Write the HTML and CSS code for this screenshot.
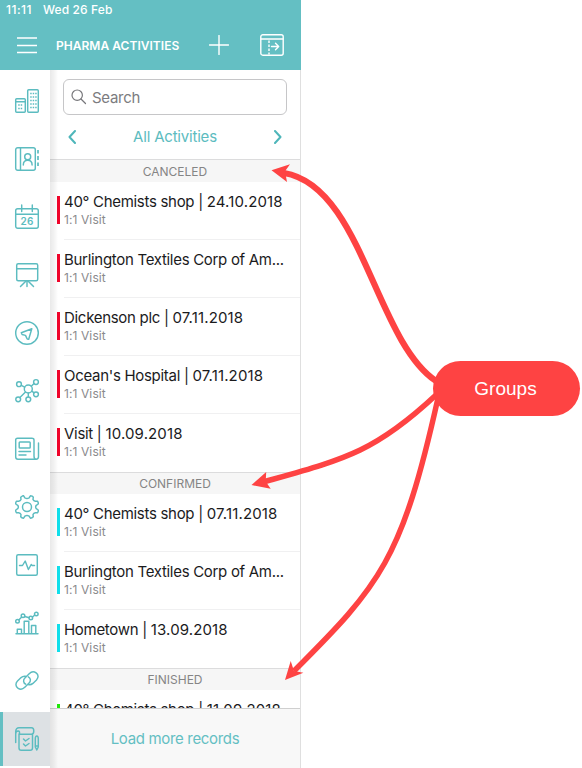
FILE: index.html
```html
<!DOCTYPE html>
<html lang="en">
<head>
<meta charset="utf-8">
<title>Pharma Activities</title>
<link rel="stylesheet" href="styles.css">
</head>
<body>
<div class="app">
  <header class="header">
    <div class="status"><span>11:11</span><span>Wed 26 Feb</span></div>
    <div class="toolbar">
      <svg class="menu" width="20" height="18" viewBox="0 0 20 18"><path d="M0 2h20M0 9.500h20M0 16.500h20"/></svg>
      <h1 class="heading">PHARMA ACTIVITIES</h1>
      <svg class="add" width="20" height="20" viewBox="0 0 20 20"><path d="M10 .5v19M.5 10h19"/></svg>
      <svg class="panel-icon" width="24" height="22" viewBox="0 0 24 22"><rect x=".8" y=".8" width="22.400" height="20.400" rx="2"/><path d="M1 5h22"/><path d="M9 6.500v14" class="dashed"/><path d="M11.500 12.500h7M15.500 9.300l3.200 3.200-3.200 3.200"/></svg>
    </div>
  </header>
  <div class="main">
    <nav class="nav">
      <a class="nav-item"><svg class="icon" viewBox="0 0 24 24"><rect x=".7" y="9.700" width="9.600" height="13.600" rx="1"/><path d="M1 12.700h9"/><rect x="12.700" y=".7" width="10.600" height="22.600" rx="1"/><path class="dots" d="M3.200 16h5M3.200 19.500h5M15.200 4.500h6.500M15.200 8h6.500M15.200 11.500h6.500M15.200 15h6.500M15.200 18.500h6.500"/></svg></a>
      <a class="nav-item"><svg class="icon" viewBox="0 0 24 24"><rect x=".7" y=".7" width="19.600" height="22.600" rx="2"/><path d="M5.500 1v22M8.300 18c0-3.500 2-4.800 4.400-4.800s4.400 1.300 4.400 4.800"/><circle cx="12.700" cy="9.700" r="3"/><path d="M23 3v3.500M23 9v4M23 15.500V19" class="bold"/></svg></a>
      <a class="nav-item"><svg class="icon" viewBox="0 0 24 24"><rect x=".7" y="3.700" width="22.600" height="19.600" rx="2"/><path d="M1 9.200h22M6.700 0v6.500M17.300 0v6.500"/><text class="day" x="12.200" y="19.500">26</text></svg></a>
      <a class="nav-item"><svg class="icon" viewBox="0 0 24 24"><rect x="1.700" y=".7" width="21" height="17" rx="1.500"/><path d="M2 5.700h20.500M12 18v5.500M10.500 18.500l-5 5M13.500 18.500l5 5"/></svg></a>
      <a class="nav-item"><svg class="icon" viewBox="0 0 24 24"><circle cx="12" cy="12" r="11.300"/><path d="M16.800 7.800 6.300 11.800l.8 1.700 3.400.9 1.700 3.600 1.500.2z"/></svg></a>
      <a class="nav-item"><svg class="icon network" viewBox="0 0 24 24"><circle cx="13.300" cy="11" r="4"/><circle cx="4" cy="6.200" r="2.400"/><circle cx="21" cy="4" r="2.400"/><circle cx="21" cy="16.300" r="2.400"/><circle cx="13.300" cy="21.300" r="2.400"/><circle cx="3.200" cy="21.300" r="2.400"/><path d="M6.300 7.400 9.700 9.200M16.300 8.200 19 5.600M16.800 13.200l2 1.500M13.300 15v3.800M10.500 14l-5.600 5.500"/></svg></a>
      <a class="nav-item"><svg class="icon" viewBox="0 0 24 24"><path d="M19 19V3c0-1.500-.8-1.800-2-1.800H2.500C1.200 1.200.7 2 .7 3v17c0 1.300.7 2.200 2.200 2.200h18.200c1.600 0 2.400-.8 2.400-2.400V6M19 19c0 2 .7 3.200 2 3.200"/><rect x="4.200" y="5" width="11" height="6" rx=".8"/><path d="M4 14.500h11.500M4 18h7"/></svg></a>
      <a class="nav-item"><svg class="icon" viewBox="0 0 24 24"><circle cx="12" cy="12" r="4.500"/><path d="M7 1.200 Q7.700.5 8.600.8 L10 3 Q12 4.200 14 3 L15.400.8 Q17.500.8 18.300 2.200 L18 4.500 Q18.600 6 20.300 6.200 L22.500 6.200 Q23.600 7.500 23.200 9 L21.300 10.300 Q20 12 21.300 13.700 L23.200 15 Q23.600 16.500 22.500 17.800 L20.300 17.800 Q18.600 18 18 19.500 L18.300 21.800 Q17 23.300 15.400 23.200 L14 21 Q12 19.800 10 21 L8.600 23.200 Q6.800 23.300 5.700 21.800 L6 19.500 Q5.400 18 3.700 17.800 L1.500 17.800 Q.4 16.500.8 15 L2.700 13.700 Q4 12 2.700 10.300 L.8 9 Q.4 7.500 1.500 6.200 L3.700 6.200 Q5.400 6 6 4.500 L5.700 2.200z"/></svg></a>
      <a class="nav-item"><svg class="icon" viewBox="0 0 24 24"><rect x="1.700" y="1.700" width="20.600" height="20.600" rx="1.500"/><path d="M4.500 12.500h3L10.200 8l3.200 8.500 2.800-5 1 1h2.300"/></svg></a>
      <a class="nav-item"><svg class="icon" viewBox="0 0 24 24"><path d="M1 22.800h22M2.300 22.500v-4.200h4.200v4.200M9.200 22.500V10.300h4.600v12.200M16.500 22.500v-8h4.300v8M4 8.700l2.500-2.500M9.800 5.500l4.400 1.300M17.500 6l2-1.800"/><circle cx="2.500" cy="10.200" r="1.800"/><circle cx="8" cy="4.700" r="1.800"/><circle cx="15.800" cy="7" r="1.800"/><circle cx="21.300" cy="3" r="1.800"/></svg></a>
      <a class="nav-item"><svg class="icon link" viewBox="0 0 24 24"><path d="M10.700 16.200c-2.600-1.300-2.700-4.300-.8-6.200l4.300-4.300c2.200-2.200 4.700-2.400 6.900-.8 2.600 2 2.500 4.800.4 7l-3.600 3.500c-1.300 1.200-2.700 1.500-4.300 1.300"/><path d="M13.300 8.800c2.600 1.300 2.700 4.300.8 6.200l-4.300 4.300c-2.200 2.200-4.700 2.400-6.900.8-2.600-2-2.500-4.800-.4-7l3.600-3.500c1.300-1.200 2.700-1.500 4.300-1.300"/></svg></a>
      <a class="nav-item active"><svg class="icon" viewBox="0 0 24 24"><path d="M.7 15.500V4.500C.7 2 2 .8 4 .8h12.500c1.500 0 2.300 1.200 2.300 3.200s-.8 3.200-2.300 3.200H4M4 7.200V21c0 1.500.8 2.300 2.200 2.300h9c1.600 0 2.300-.8 2.300-2.300V7.200M.7 7c0-2 1.300-3 2.500-3s2 1.300.8 3.200"/><path d="m8.500 12 2 2 3.500-2.500M8.500 17l2 2 3.500-2.500"/><path d="M20.300 12c0-2 .5-3 1.500-3s1.500 1 1.500 3v8l-1.500 3-1.500-3zM20.300 19h3"/></svg></a>
    </nav>
    <section class="panel">
      <div class="search"><svg width="16" height="16" viewBox="0 0 16 16"><circle cx="6.200" cy="6.200" r="5.200"/><path d="m10 10 4.500 4.500"/></svg><span>Search</span></div>
      <div class="filter">
        <svg width="8" height="14" viewBox="0 0 8 14"><path d="M7 1 1.500 7 7 13"/></svg>
        <span>All Activities</span>
        <svg width="8" height="14" viewBox="0 0 8 14"><path d="m1 1 5.500 6L1 13"/></svg>
      </div>
      <div class="list">
        <h2 class="group first">CANCELED</h2>
        <article class="item canceled"><b>40° Chemists shop | <i>24.10.2018</i></b><small>1:1 Visit</small></article>
        <article class="item canceled"><b>Burlington Textiles Corp of Am...</b><small>1:1 Visit</small></article>
        <article class="item canceled"><b>Dickenson plc | <i>07.11.2018</i></b><small>1:1 Visit</small></article>
        <article class="item canceled"><b>Ocean's Hospital | <i>07.11.2018</i></b><small>1:1 Visit</small></article>
        <article class="item canceled"><b>Visit | <i>10.09.2018</i></b><small>1:1 Visit</small></article>
        <h2 class="group">CONFIRMED</h2>
        <article class="item confirmed"><b>40° Chemists shop | <i>07.11.2018</i></b><small>1:1 Visit</small></article>
        <article class="item confirmed"><b>Burlington Textiles Corp of Am...</b><small>1:1 Visit</small></article>
        <article class="item confirmed"><b>Hometown | <i>13.09.2018</i></b><small>1:1 Visit</small></article>
        <h2 class="group">FINISHED</h2>
        <article class="item finished"><b>40° Chemists shop | <i>11.09.2018</i></b></article>
      </div>
      <footer class="more">Load more records</footer>
    </section>
  </div>
</div>
<svg class="arrows" width="582" height="768" viewBox="0 0 582 768">
  <path class="wide" d="M284 173C362 186 375 340 436 381"/>
  <path d="M265 481.500C345 459 375 452 436 395"/>
  <path d="M438 398C402 560 380 585 294 671"/>
  <path class="head" d="m271.500 170.200 18.500-6-5 7 2 10.800zM251.500 485l14.700-13-.5 9.500 5 7.300zM285 680l5.700-19 3.300 10 9.400 1.700z"/>
</svg>
<div class="callout">Groups</div>
</body>
</html>
```

FILE: styles.css
```css
* { box-sizing: border-box; }
body { margin: 0; width: 582px; height: 768px; overflow: hidden; background: #fff; font-family: Inter, "Liberation Sans", sans-serif; }
svg { fill: none; stroke-linecap: round; stroke-linejoin: round; flex: none; }
.app { width: 301px; height: 768px; display: flex; flex-direction: column; }
.header { height: 70px; background: #64bfc3; color: #fff; }
.status { display: flex; gap: 11px; height: 20px; padding-left: 6px; font-size: 12px; line-height: 20px; font-weight: 500; letter-spacing: .1px; }
.status span:first-child { letter-spacing: .5px; }
.toolbar { display: flex; align-items: center; height: 50px; padding: 0 17px; }
.toolbar svg { stroke: #fff; stroke-width: 1.4; }
.heading { margin: 0 0 0 19px; width: 153px; font-size: 12px; line-height: 18px; font-weight: 600; letter-spacing: .03px; white-space: nowrap; padding-top: 2px; }
.panel-icon { margin-left: 31px; }
.toolbar .dashed { stroke-dasharray: 2.5 1.5; stroke-linecap: butt; }
.main { display: flex; flex: 1; min-height: 0; }
.nav { width: 50px; padding-top: 4px; display: flex; flex-direction: column; gap: 4px; overflow: hidden; }
.nav-item { flex: none; height: 54px; padding-left: 15px; display: flex; align-items: center; }
.nav-item.active { background: #dde1e4; border-left: 3px solid #64bfc3; padding-left: 12px; }
.icon { width: 24px; height: 24px; stroke: #5cbcc0; stroke-width: 1.45; overflow: visible; }
.icon.network, .icon.link { margin-bottom: 1.5px; }
.icon .dots { stroke-width: 1.6; stroke-dasharray: 1.5 1; stroke-linecap: butt; }
.icon .bold { stroke-width: 1.7; stroke-linecap: butt; }
.day { fill: #5cbcc0; stroke: none; font-size: 10px; font-weight: 600; text-anchor: middle; letter-spacing: .3px; }
.panel { width: 251px; border-right: 1px solid #dfdfdf; display: flex; flex-direction: column; position: relative; }
.panel::before { content: ""; position: absolute; z-index: 1; left: 0; top: 0; bottom: 0; width: 8px; background: linear-gradient(90deg, rgba(0,0,0,.085), rgba(0,0,0,.05) 50%, rgba(0,0,0,0)); }
.search { flex: none; height: 36px; margin: 9px 13px 0; padding-left: 7px; border: 1px solid #c6c6c8; border-radius: 6px; display: flex; align-items: center; gap: 5px; font-size: 15px; letter-spacing: -.3px; color: #7c7c80; }
.search svg { stroke: #77777b; stroke-width: 1.2; }
.filter { flex: none; height: 44px; padding: 0 18px 1px; display: flex; align-items: center; justify-content: space-between; color: #5cbcc0; font-size: 15px; letter-spacing: -.2px; }
.filter svg { stroke: #4eb6ba; stroke-width: 2; }
.list { flex: 1; min-height: 0; overflow: hidden; }
.group { margin: 0; height: 22px; border-top: 1px solid #dcdcdd; background: #f6f6f6; color: #858585; font-size: 12px; font-weight: 400; line-height: 22px; text-align: center; }
.group.first { height: 23px; line-height: 23px; }
.item { position: relative; height: 58px; padding: 10px 0 0 14px; white-space: nowrap; }
.item::before { content: ""; position: absolute; left: 7px; top: 14px; width: 3px; height: 28px; background: #f0042a; }
.item.confirmed::before { background: #10dfeb; }
.item.finished::before { background: #20e80a; }
.item:has(+ .item) { background: linear-gradient(#f0f0f1, #f0f0f1) 14px 57px / 100% 1px no-repeat; }
.item b, .item small { display: block; font-weight: 400; }
.item b { font-size: 15px; line-height: 20px; color: #1b1b1d; letter-spacing: -.3px; }
.item i { font-style: normal; letter-spacing: .13px; }
.item small { font-size: 12px; line-height: 15px; color: #8a8a8c; letter-spacing: .1px; }
.more { flex: none; height: 60px; border-top: 1px solid #cfcfcf; background: #f8f8f8; color: #64bfc3; font-size: 15px; letter-spacing: -.33px; line-height: 60px; text-align: center; }
.arrows { position: absolute; left: 0; top: 0; z-index: 2; stroke: #fe4343; stroke-width: 5.5; stroke-linecap: butt; }
.arrows .wide { stroke-width: 6.2; }
.arrows .head { fill: #fe4343; stroke: none; }
.callout { position: absolute; z-index: 3; left: 433px; top: 361px; width: 147px; height: 55px; padding-right: 2px; border-radius: 27.500px; background: #fe4343; color: #fff; font: 19px/55px "Liberation Sans", sans-serif; text-align: center; }
```
